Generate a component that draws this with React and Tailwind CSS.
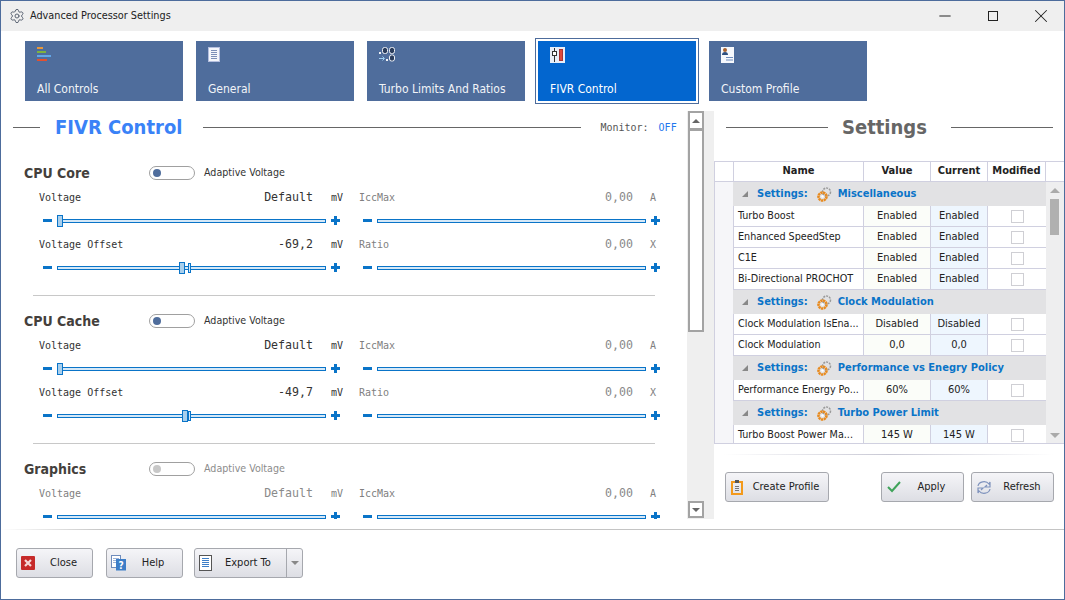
import React from "react";
import { Settings as GearIcon, Minus, X } from "lucide-react";

const uiFont = "font-['DejaVu_Sans_Condensed','DejaVu_Sans',sans-serif]";
const monoFont = "font-['DejaVu_Sans_Mono',monospace]";

const tabs = [
  { label: "All Controls", icon: <BarsIcon /> },
  { label: "General", icon: <PageIcon /> },
  { label: "Turbo Limits And Ratios", icon: <RatioIcon /> },
  { label: "FIVR Control", icon: <FaderIcon />, active: true },
  { label: "Custom Profile", icon: <ProfileIcon /> },
];

const sections = [
  { name: "CPU Core", offset: "-69,2", thumb: 121 },
  { name: "CPU Cache", offset: "-49,7", thumb: 124 },
  { name: "Graphics", disabled: true, clipped: true },
];

const groups = [
  {
    title: "Miscellaneous",
    rows: [
      ["Turbo Boost", "Enabled"],
      ["Enhanced SpeedStep", "Enabled"],
      ["C1E", "Enabled"],
      ["Bi-Directional PROCHOT", "Enabled"],
    ],
  },
  {
    title: "Clock Modulation",
    rows: [
      ["Clock Modulation IsEna...", "Disabled"],
      ["Clock Modulation", "0,0"],
    ],
  },
  { title: "Performance vs Enegry Policy", rows: [["Performance Energy Po...", "60%"]] },
  { title: "Turbo Power Limit", rows: [["Turbo Boost Power Ma...", "145 W"]] },
];

export default function App() {
  return (
    <div className={`w-[1065px] h-[600px] flex flex-col border border-[#4d6c9c] bg-white overflow-hidden ${uiFont}`}>
      {/* title bar */}
      <div className="h-[30px] shrink-0 bg-[#efefef] flex items-center pl-[8px]">
        <GearIcon className="w-[16px] h-[16px] text-[#5d6675]" strokeWidth={1.5} />
        <span className="ml-[5px] pt-px text-[10.8px] text-[#222]">Advanced Processor Settings</span>
        <div className="ml-auto mr-[-1px] flex items-center text-[#222]">
          <div className="w-[48px] flex justify-center"><Minus className="w-[18px] h-[18px]" strokeWidth={1.3} /></div>
          <div className="w-[48px] flex justify-center"><div className="w-[10px] h-[10px] border border-[#222]" /></div>
          <div className="w-[48px] flex justify-center"><X className="w-[22px] h-[22px]" strokeWidth={1.1} /></div>
        </div>
      </div>

      {/* tabs */}
      <div className="h-[80px] shrink-0 flex items-center pl-[24px]">
        {tabs.map((tab) => (
          <Tab key={tab.label} tab={tab} />
        ))}
      </div>

      <div className="h-[418px] shrink-0 flex">
        <FivrPanel />
        <SettingsPanel />
      </div>

      {/* footer */}
      <div className="h-px shrink-0 bg-gradient-to-r from-white via-[#c4c4c4] via-10% to-[#c4c4c4]" />
      <div className="flex-1 flex items-start pt-[18px] pl-[15px]">
        <ActionButton icon={<CloseIcon />} label="Close" className="w-[77px]" />
        <ActionButton icon={<HelpIcon />} label="Help" className="w-[77px] ml-[13px] pr-[3px]" />
        <div className="ml-[11px] w-[109px] h-[30px] flex rounded-[3px] border border-[#a6a8ae] bg-gradient-to-b from-[#f5f5f8] to-[#dddee4] text-[11px] text-[#222]">
          <div className="flex-1 flex items-center pl-[3px]">
            <ExportIcon />
            <span className="ml-[13px]">Export To</span>
          </div>
          <div className="w-[16px] border-l border-[#a6a8ae] flex items-center justify-center">
            <div className="w-0 h-0 border-x-[4px] border-x-transparent border-t-[4px] border-t-[#888]" />
          </div>
        </div>
      </div>
    </div>
  );
}

function Tab({ tab }) {
  if (tab.active) {
    return (
      <div className="mx-[10px] p-[2px] border border-[#4d6c9c]">
        <div className="w-[158px] h-[60px] bg-[#0366cf] pl-[12px] pt-[6px] flex flex-col text-white">
          <div className="h-[20px]">{tab.icon}</div>
          <span className="mt-[13px] text-[12px]">{tab.label}</span>
        </div>
      </div>
    );
  }
  return (
    <div className="w-[158px] h-[60px] mr-[13px] last:mr-0 bg-[#4f6d9c] pl-[12px] pt-[6px] flex flex-col text-[#f2f4f8] [&:nth-child(3)]:mr-0">
      <div className="h-[20px]">{tab.icon}</div>
      <span className="mt-[13px] text-[12px]">{tab.label}</span>
    </div>
  );
}

function FivrPanel() {
  return (
    <div className="w-[713px] shrink-0 flex">
      <div className="w-[686px] shrink-0 h-[408px] overflow-hidden">
        <div className="h-[32px] flex items-center pl-[12px]">
          <div className="w-[27px] h-px bg-[#666]" />
          <span className="ml-[15px] text-[20px] leading-none font-bold text-[#3a82f7]">FIVR Control</span>
          <div className="ml-[21px] w-[378px] h-px bg-[#666]" />
          <span className={`ml-[19px] text-[10px] text-[#555] ${monoFont}`}>Monitor:</span>
          <span className={`ml-[10px] text-[10px] text-[#2277ee] ${monoFont}`}>OFF</span>
        </div>
        <div className="pt-[20px]">
          {sections.map((section, i) => (
            <VoltageSection key={section.name} section={section} last={i === sections.length - 1} />
          ))}
        </div>
      </div>

      {/* scroll strip */}
      <div className="w-[27px] h-[408px] shrink-0 bg-[#efefef] pl-px">
        <div className="w-[16px] h-full flex flex-col bg-white">
          <ScrollButton up />
          <div className="h-[204px] border-2 border-t-[3px] border-[#a3a3a3] bg-white" />
          <div className="flex-1 bg-[#efefef]" />
          <ScrollButton />
          <div className="h-[1px] bg-[#efefef]" />
        </div>
      </div>
    </div>
  );
}

function ScrollButton({ up }) {
  return (
    <div className={`h-[17px] border-2 border-[#a3a3a3] bg-white flex items-center justify-center ${up ? "border-b-0" : ""}`}>
      {up ? (
        <div className="w-0 h-0 border-x-[4px] border-x-transparent border-b-[4px] border-b-[#666]" />
      ) : (
        <div className="w-0 h-0 border-x-[4px] border-x-transparent border-t-[4px] border-t-[#666]" />
      )}
    </div>
  );
}

function VoltageSection({ section, last }) {
  const dim = section.disabled;
  return (
    <div className="h-[148px] pl-[23px]">
      <div className="h-[20px] flex items-center">
        <span className="w-[125px] text-[14px] font-bold text-[#44403c]">{section.name}</span>
        <div className="w-[46px] h-[14px] rounded-full border border-[#a0a0a0] flex items-center pl-[3px]">
          <div className={`w-[8px] h-[8px] rounded-full ${dim ? "bg-[#c8c8c8]" : "bg-[#4f6d9c]"}`} />
        </div>
        <span className={`ml-[9px] text-[10.6px] ${dim ? "text-[#8c8c8c]" : "text-[#333]"}`}>Adaptive Voltage</span>
      </div>

      <div className="mt-[6px] pl-[15px] grid grid-cols-[320px_301px] gap-y-[9px]">
        <ControlRow label="Voltage" value="Default" unit="mV" thumb={dim ? null : -1} strong={!dim} faded={dim} />
        <ControlRow label="IccMax" value="0,00" unit="A" faded right />
        {!section.clipped && (
          <>
            <ControlRow label="Voltage Offset" value={section.offset} unit="mV" thumb={section.thumb} tick strong />
            <ControlRow label="Ratio" value="0,00" unit="X" faded right />
          </>
        )}
      </div>

      {!last && <div className="mt-[21px] ml-[9px] w-[622px] h-px bg-[#c8c8c8]" />}
    </div>
  );
}

function ControlRow({ label, value, unit, thumb, tick, strong, faded, right }) {
  const labelColor = faded ? "text-[#808080]" : "text-[#333]";
  const valueColor = strong ? "text-[#333]" : "text-[#8a8a8a]";
  return (
    <div>
      <div className={`h-[16px] flex items-baseline ${right ? "" : "pr-[16px]"} ${monoFont}`}>
        <span className={`text-[10px] ${labelColor}`}>{label}</span>
        <span className={`ml-auto text-[11.6px] ${valueColor}`}>{value}</span>
        <span className={`text-[10px] text-right ${right ? "w-[23px] mr-[4px]" : "w-[30px]"} ${labelColor}`}>{unit}</span>
      </div>
      <Slider thumb={thumb} tick={tick} right={right} />
    </div>
  );
}

function Slider({ thumb, tick, right }) {
  return (
    <div className={`mt-[9px] h-[13px] flex items-center pl-[4px] ${right ? "w-[301px]" : "pr-[19px]"}`}>
      <div className="w-[9px] h-[3px] bg-[#0a74c8]" />
      <div className="relative ml-[5px] flex-1 h-[4px] border border-[#0a74c8] bg-[#d5e8f7]">
        {thumb !== null && thumb !== undefined && (
          <div
            className="absolute top-[-5px] w-[6px] h-[12px] border border-[#0a74c8] bg-[#a9cfec]"
            style={{ left: thumb }}
          />
        )}
        {tick && <div className="absolute top-[-4px] left-[130px] w-[3px] h-[10px] border border-[#0a74c8] bg-[#d5e8f7]" />}
      </div>
      <div className="relative ml-[5px] w-[9px] h-[9px]">
        <div className="absolute top-[3px] left-0 w-[9px] h-[3px] bg-[#0a74c8]" />
        <div className="absolute top-0 left-[3px] w-[3px] h-[9px] bg-[#0a74c8]" />
      </div>
    </div>
  );
}

function SettingsPanel() {
  return (
    <div className="w-[350px] shrink-0 flex flex-col">
      <div className="h-[50px] shrink-0">
        <div className="h-[32px] flex items-center">
          <div className="ml-[12px] w-[102px] h-px bg-[#666]" />
          <span className="ml-[14px] w-[109px] text-[20px] leading-none font-bold text-[#666]">Settings</span>
          <div className="w-[102px] h-px bg-[#666]" />
        </div>
      </div>
      <SettingsGrid />
      <div className="mt-[10px] ml-[10px] w-[330px] h-px shrink-0 bg-gradient-to-r from-white via-[#c8c8d4] to-white" />
      <div className="mt-[17px] flex pl-[11px]">
        <ActionButton icon={<ClipboardIcon />} label="Create Profile" className="w-[104px]" />
        <ActionButton icon={<CheckIcon />} label="Apply" className="w-[83px] ml-[52px] pr-[1px]" />
        <ActionButton icon={<RefreshIcon />} label="Refresh" className="w-[83px] ml-[7px] pr-[1px]" />
      </div>
    </div>
  );
}

function SettingsGrid() {
  return (
    <div className="h-[283px] shrink-0 flex flex-col overflow-hidden text-[11px] text-[#222] bg-[#efeff1] border-l border-b border-[#d0d0e0]">
      <div className="h-[21px] shrink-0 flex bg-white border-t border-b border-[#d0d0e0] font-bold">
        <div className="w-[18px]" />
        <HeadCell className="w-[130px]">Name</HeadCell>
        <HeadCell className="w-[67px]">Value</HeadCell>
        <HeadCell className="w-[57px]">Current</HeadCell>
        <HeadCell className="w-[59px] border-r border-[#d0d0e0]">Modified</HeadCell>
      </div>
      <div className="relative flex-1 overflow-hidden bg-[#eeeeef]">
        {groups.map((group) => (
          <GridGroup key={group.title} group={group} />
        ))}

        {/* grid scrollbar */}
        <div className="absolute top-[6px] right-[4px] w-0 h-0 border-x-[5px] border-x-transparent border-b-[5px] border-b-[#aaa]" />
        <div className="absolute top-[17px] right-[5px] w-[9px] h-[36px] bg-[#b0b0b0]" />
        <div className="absolute top-[251px] right-[4px] w-0 h-0 border-x-[5px] border-x-transparent border-t-[5px] border-t-[#aaa]" />
      </div>
    </div>
  );
}

function HeadCell({ className, children }) {
  return (
    <div className={`border-l border-[#d0d0e0] flex items-center justify-center ${className}`}>{children}</div>
  );
}

function GridGroup({ group }) {
  return (
    <div>
      <div className="h-[24px] flex">
        <div className="w-[18px] bg-[#f6f6f9] shrink-0" />
        <div className="w-[313px] bg-[#e2e2e4] flex items-center pl-[9px] font-bold">
          <div className="w-0 h-0 border-l-[6px] border-l-transparent border-b-[6px] border-b-[#888]" />
          <span className="ml-[9px] pt-px text-[#0a74c8]">Settings:</span>
          <span className="ml-[8px]"><OrangeGear /></span>
          <span className="ml-[5px] pt-px text-[#0a74c8]">{group.title}</span>
        </div>
      </div>
      {group.rows.map(([name, value]) => (
        <div key={name} className="h-[21px] flex">
          <div className="w-[18px] bg-[#f6f6f9] shrink-0" />
          <div className="flex border-b border-[#d0d0e0] border-l bg-white">
            <div className="w-[129px] pl-[4px] pt-px flex items-center whitespace-nowrap overflow-hidden text-[10.7px]">{name}</div>
            <div className="w-[67px] border-l border-[#d0d0e0] pt-px bg-[#fbfdf9] flex items-center justify-center">{value}</div>
            <div className="w-[57px] border-l border-[#d0d0e0] pt-px bg-[#eef6fe] flex items-center justify-center">{value}</div>
            <div className="w-[59px] border-l border-[#d0d0e0] flex items-center justify-center">
              <div className="w-[13px] h-[13px] border border-[#cfcfd4] bg-white" />
            </div>
          </div>
        </div>
      ))}
    </div>
  );
}

function ActionButton({ icon, label, className }) {
  return (
    <div className={`relative h-[30px] shrink-0 flex items-center rounded-[3px] border border-[#a6a8ae] bg-gradient-to-b from-[#f5f5f8] to-[#dddee4] text-[11px] text-[#222] pl-[4px] ${className}`}>
      {icon}
      <span className="flex-1 text-center">{label}</span>
    </div>
  );
}

function BarsIcon() {
  return (
    <svg width="16" height="16" viewBox="0 0 16 16">
      <rect x="0" y="0" width="6" height="2" fill="#e8973a" />
      <rect x="0" y="4" width="9" height="2" fill="#7fb23f" />
      <rect x="0" y="8" width="14" height="2" fill="#62a6e8" />
      <rect x="0" y="12" width="10" height="2" fill="#e2502f" />
    </svg>
  );
}

function PageIcon() {
  return (
    <svg width="12" height="15" viewBox="0 0 12 15">
      <rect x="0.5" y="0.5" width="11" height="14" fill="#f4f6fb" stroke="#b4bede" />
      <path d="M3 3.5h6M3 5.5h6M3 7.5h6M3 9.5h6M3 11.5h6" stroke="#7c8fb8" />
    </svg>
  );
}

function RatioIcon() {
  return (
    <svg width="17" height="15" viewBox="0 0 17 15" fill="none">
      <rect x="0" y="5" width="2" height="2" fill="#eef1f6" />
      <rect x="3.5" y="0.5" width="5" height="6" rx="2" stroke="#eef1f6" fill="#2b3d5c" />
      <rect x="10.5" y="0.5" width="5" height="6" rx="2" stroke="#eef1f6" fill="#2b3d5c" />
      <path d="M0 11.5h5M3.5 9.5l2 2-2 2" stroke="#9fd0f2" />
      <rect x="7" y="12" width="2" height="2" fill="#eef1f6" />
      <rect x="10.5" y="8" width="5" height="6" rx="2" stroke="#eef1f6" fill="#2b3d5c" />
    </svg>
  );
}

function FaderIcon() {
  return (
    <svg width="15" height="16" viewBox="0 0 15 16">
      <rect width="15" height="16" fill="#e8eef8" />
      <path d="M4.5 1v14" stroke="#333" />
      <rect x="2.5" y="4.5" width="4" height="4" fill="#fff" stroke="#333" />
      <rect x="9.5" y="2.5" width="3" height="11" fill="#e04a3a" stroke="#a33" />
    </svg>
  );
}

function ProfileIcon() {
  return (
    <svg width="13" height="16" viewBox="0 0 13 16">
      <rect width="13" height="16" fill="#f6f8fc" />
      <circle cx="4" cy="3" r="2" fill="#a8622e" />
      <path d="M1 8c0-2 1-3 3-3s3 1 3 3z" fill="#2e4f7f" />
      <path d="M5 10.5h7M5 13h7" stroke="#6f8cbc" />
    </svg>
  );
}

function OrangeGear() {
  return (
    <svg width="17" height="17" viewBox="0 0 17 17" fill="none" className="block">
      <circle cx="10.5" cy="6" r="4" stroke="#9a9a9a" strokeWidth="1.5" strokeDasharray="2 1" />
      <circle cx="6.5" cy="10.5" r="4" stroke="#e88a1e" strokeWidth="2.6" strokeDasharray="2.2 0.5" />
      <circle cx="6.5" cy="10.5" r="1.2" fill="#fff" />
    </svg>
  );
}

function CloseIcon() {
  return (
    <svg width="14" height="14" viewBox="0 0 14 14" className="shrink-0">
      <rect width="14" height="14" rx="1" fill="#c62a2a" />
      <path d="M4 4l6 6M10 4l-6 6" stroke="#f6d8d8" strokeWidth="2.2" />
    </svg>
  );
}

function HelpIcon() {
  return (
    <svg width="16" height="16" viewBox="0 0 16 16" className="shrink-0">
      <rect x="0.5" y="0.5" width="9" height="12" fill="#fff" stroke="#6f8cbc" />
      <path d="M2 3.5h6M2 5.5h6M2 7.5h6" stroke="#9db2d6" />
      <rect x="5" y="4" width="10" height="11.5" fill="#3d7ec8" />
      <text x="10" y="13.5" fontSize="10" fontWeight="bold" textAnchor="middle" fill="#fff">?</text>
    </svg>
  );
}

function ExportIcon() {
  return (
    <svg width="13" height="16" viewBox="0 0 13 16" className="shrink-0 ml-[1px]">
      <rect x="0.5" y="0.5" width="12" height="15" fill="#fff" stroke="#555" />
      <path d="M3 3.5h7M3 5.5h7M3 7.5h7M3 9.5h7M3 11.5h7" stroke="#3d7ec8" />
    </svg>
  );
}

function ClipboardIcon() {
  return (
    <svg width="13" height="15" viewBox="0 0 13 15" fill="none" className="shrink-0 ml-[1px]">
      <rect x="1" y="2" width="10" height="12" stroke="#f39a1c" strokeWidth="2" />
      <rect x="4" y="0" width="4" height="3" fill="#555" />
      <path d="M4 6.5h4M4 8.5h4M4 10.5h4" stroke="#777" />
    </svg>
  );
}

function CheckIcon() {
  return (
    <svg width="14" height="12" viewBox="0 0 14 12" fill="none" className="shrink-0 ml-[1px]">
      <path d="M1 6l4 4 8-9" stroke="#3fa35a" strokeWidth="2" />
    </svg>
  );
}

function RefreshIcon() {
  return (
    <svg width="16" height="15" viewBox="0 0 16 15" fill="none" className="shrink-0">
      <path d="M2 6a6 5 0 0 1 11-2l1-2v5h-5l2-2" stroke="#7f93bd" strokeWidth="1.2" />
      <path d="M14 9a6 5 0 0 1-11 2l-1 2V8h5l-2 2" stroke="#7f93bd" strokeWidth="1.2" />
    </svg>
  );
}
